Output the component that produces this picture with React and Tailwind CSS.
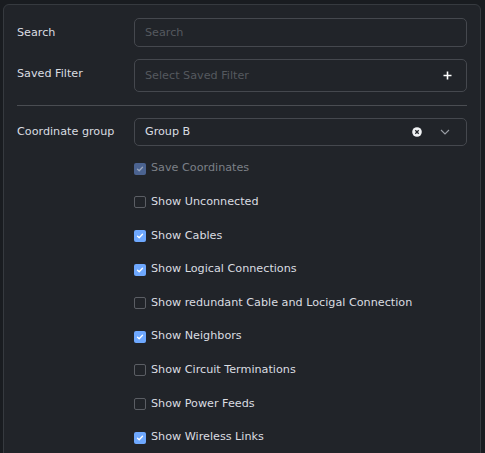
import { useState } from 'react';

const OPTIONS = [
  { label: 'Save Coordinates', checked: true, disabled: true },
  { label: 'Show Unconnected', checked: false },
  { label: 'Show Cables', checked: true },
  { label: 'Show Logical Connections', checked: true },
  { label: 'Show redundant Cable and Locigal Connection', checked: false },
  { label: 'Show Neighbors', checked: true },
  { label: 'Show Circuit Terminations', checked: false },
  { label: 'Show Power Feeds', checked: false },
  { label: 'Show Wireless Links', checked: true },
];

function Checkbox({ checked, disabled }) {
  if (!checked) {
    return <span className="w-[12px] h-[12px] rounded-[2px] border border-[#5b5e64] bg-[#212429] shrink-0" />;
  }
  return (
    <span
      className={`w-[12px] h-[12px] rounded-[2px] shrink-0 flex items-center justify-center ${
        disabled ? 'bg-[#4b6390]' : 'bg-[#6ea8fe]'
      }`}
    >
      <svg width="8" height="8" viewBox="0 0 8 8" fill="none">
        <path
          d="M1.5 4.2 L3.2 5.8 L6.5 2.2"
          stroke={disabled ? '#9aa6bd' : '#ffffff'}
          strokeWidth="1.3"
          strokeLinecap="round"
          strokeLinejoin="round"
        />
      </svg>
    </span>
  );
}

export default function App() {
  const [options, setOptions] = useState(OPTIONS);

  const toggle = (index) => {
    setOptions((prev) =>
      prev.map((opt, i) => (i === index && !opt.disabled ? { ...opt, checked: !opt.checked } : opt))
    );
  };

  return (
    <div
      className="w-[485px] h-[453px] overflow-hidden bg-[#191c20] pt-[4px] pl-[3px] pr-[4px]"
      style={{ fontFamily: '"DejaVu Sans", sans-serif' }}
    >
      <div className="h-[480px] rounded-[6px] border border-[#363a3f] bg-[#212429] px-[13px] pt-[13px] text-[11.2px] text-[#dadde1]">
        {/* Search */}
        <div className="flex items-center">
          <div className="w-[117px] pt-[1px]">Search</div>
          <div className="flex-1 h-[29px] rounded-[5px] border border-[#45484e] flex items-center px-[10px] text-[#55595f]">
            <span className="pt-[1px]">Search</span>
          </div>
        </div>

        {/* Saved Filter */}
        <div className="flex items-start mt-[12px]">
          <div className="w-[117px] pt-[7px]">Saved Filter</div>
          <div className="flex-1 h-[33px] rounded-[5px] border border-[#45484e] flex items-center justify-between pl-[10px] pr-[14px] text-[#55595f]">
            <span className="pt-[2px]">Select Saved Filter</span>
            <svg width="9" height="9" viewBox="0 0 9 9">
              <path d="M4.5 0.5 V8.5 M0.5 4.5 H8.5" stroke="#ffffff" strokeWidth="1.6" />
            </svg>
          </div>
        </div>

        <div className="h-px bg-[#4a4d52] mt-[13px] mb-[12px]" />

        {/* Coordinate group */}
        <div className="flex items-center">
          <div className="w-[117px]">Coordinate group</div>
          <div className="flex-1 h-[28px] rounded-[5px] border border-[#45484e] flex items-center pl-[10px] pr-[16px]">
            <span className="flex-1">Group B</span>
            <svg width="10" height="10" viewBox="0 0 10 10" className="mr-[18px]">
              <circle cx="5" cy="5" r="4.8" fill="#f1f3f5" />
              <path d="M3.3 3.3 L6.7 6.7 M6.7 3.3 L3.3 6.7" stroke="#212429" strokeWidth="1.3" />
            </svg>
            <svg width="10" height="6" viewBox="0 0 10 6">
              <path d="M1 1 L5 5 L9 1" stroke="#9a9ea5" strokeWidth="1.1" fill="none" />
            </svg>
          </div>
        </div>

        {/* Options */}
        <ul className="pl-[117px] mt-[6px]">
          {options.map((opt, index) => (
            <li
              key={opt.label}
              onClick={() => toggle(index)}
              className={`h-[33.6px] flex items-center gap-[5px] cursor-pointer ${
                opt.disabled ? 'text-[#7c8087]' : ''
              }`}
            >
              <Checkbox checked={opt.checked} disabled={opt.disabled} />
              <span>{opt.label}</span>
            </li>
          ))}
        </ul>
      </div>
    </div>
  );
}
